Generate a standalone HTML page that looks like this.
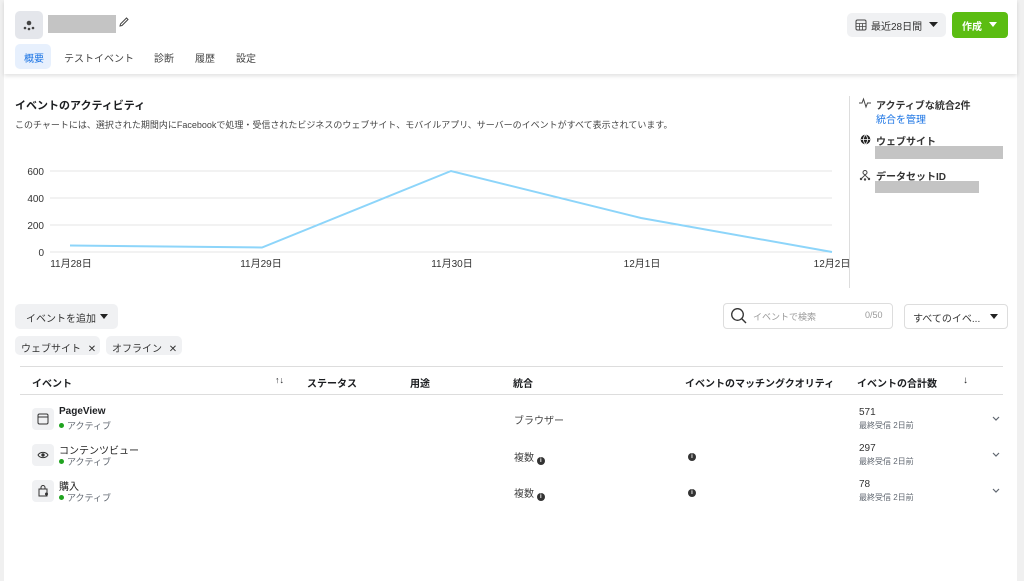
<!DOCTYPE html>
<html><head><meta charset="utf-8"><style>
*{margin:0;padding:0;box-sizing:border-box}
body{width:1024px;height:581px;background:#f0f0f0;font-family:"Liberation Sans","Noto Sans CJK JP",sans-serif;color:#1c1e21;position:relative;overflow:hidden;font-size:10px}
.a{position:absolute;white-space:nowrap}
.main{position:absolute;left:4px;top:0;width:1013px;height:581px;background:#fff}
.hdr{position:absolute;left:4px;top:0;width:1013px;height:74px;background:#fff;box-shadow:0 2px 4px rgba(0,0,0,.12)}
.gray{background:#c4c4c4}
.btn{background:#f0f1f3;border-radius:5px}
.b{font-weight:bold}
.sub{color:#606770;font-size:9px}
.dot{display:inline-block;width:5px;height:5px;border-radius:50%;background:#1fa31f;margin-right:3px;vertical-align:1px}
.ic{position:absolute;width:22px;height:22px;background:#f0f1f3;border-radius:4px}
.info{display:inline-block;width:8px;height:8px;border-radius:50%;background:#333;color:#fff;font-size:6px;text-align:center;line-height:8px;font-weight:bold;vertical-align:-1px}
</style></head><body>
<div class="main"></div>
<div class="hdr"></div>
<div class="a" style="left:15px;top:11px;width:28px;height:28px;background:#e4e6eb;border-radius:5px"></div>
<svg class="a" style="left:22px;top:18px" width="14" height="14" viewBox="0 0 14 14"><circle cx="7" cy="5" r="2.3" fill="#444"/><circle cx="3" cy="10" r="1.3" fill="#444"/><circle cx="7" cy="11" r="1.3" fill="#444"/><circle cx="11" cy="10" r="1.3" fill="#444"/></svg>
<div class="a gray" style="left:48px;top:15px;width:68px;height:18px"></div>
<svg class="a" style="left:118px;top:16px" width="12" height="12" viewBox="0 0 12 12"><path d="M2 10 L2.5 8 L8.5 2 L10 3.5 L4 9.5 Z" fill="none" stroke="#444" stroke-width="1"/></svg>
<div class="a" style="left:15px;top:44px;width:36px;height:25px;background:#e7f0fd;border-radius:5px"></div>
<div class="a" style="left:24px;top:50px;color:#1b74e4;font-size:10px">概要</div>
<div class="a" style="left:64px;top:50px;color:#444">テストイベント</div>
<div class="a" style="left:154px;top:50px;color:#444">診断</div>
<div class="a" style="left:195px;top:50px;color:#444">履歴</div>
<div class="a" style="left:236px;top:50px;color:#444">設定</div>
<div class="a btn" style="left:847px;top:13px;width:99px;height:24px"></div>
<svg class="a" style="left:855px;top:19px" width="12" height="12" viewBox="0 0 12 12"><rect x="1" y="1" width="10" height="10" rx="1.5" fill="none" stroke="#444"/><path d="M1 4.5H11M1 7.5H11M4.5 4.5V11M7.5 4.5V11" stroke="#444" stroke-width=".8"/></svg>
<div class="a" style="left:871px;top:18px;color:#333">最近28日間</div>
<svg class="a" style="left:929px;top:22px" width="9" height="5"><path d="M0 0H9L4.5 5Z" fill="#222"/></svg>
<div class="a" style="left:952px;top:12px;width:56px;height:26px;background:#5bbd12;border-radius:4px"></div>
<div class="a b" style="left:962px;top:18px;color:#fff">作成</div>
<svg class="a" style="left:989px;top:22px" width="8" height="5"><path d="M0 0H8L4 5Z" fill="#fff"/></svg>
<div class="a b" style="left:15px;top:97px;font-size:11px">イベントのアクティビティ</div>
<div class="a" style="left:15px;top:118px;font-size:9px;color:#444">このチャートには、選択された期間内にFacebookで処理・受信されたビジネスのウェブサイト、モバイルアプリ、サーバーのイベントがすべて表示されています。</div>
<div class="a" style="left:849px;top:96px;width:1px;height:192px;background:#ddd"></div>
<svg class="a" style="left:859px;top:97px" width="12" height="12" viewBox="0 0 12 12"><path d="M0 6H3L4.5 2L7 10L8.5 6H12" fill="none" stroke="#444" stroke-width="1"/></svg>
<div class="a b" style="left:876px;top:97px;color:#333">アクティブな統合2件</div>
<div class="a" style="left:876px;top:111px;color:#1b74e4">統合を管理</div>
<svg class="a" style="left:860px;top:134px" width="11" height="11" viewBox="0 0 12 12"><circle cx="6" cy="6" r="5.3" fill="#222"/><path d="M1 6H11M6 .7C3 4 3 8 6 11.3M6 .7C9 4 9 8 6 11.3" stroke="#fff" stroke-width=".9" fill="none"/></svg>
<div class="a b" style="left:876px;top:133px;color:#333">ウェブサイト</div>
<div class="a gray" style="left:875px;top:146px;width:128px;height:13px"></div>
<svg class="a" style="left:859px;top:169px" width="12" height="12" viewBox="0 0 12 12"><circle cx="6" cy="3.5" r="2" fill="none" stroke="#444"/><path d="M2 10L6 6L10 10" fill="none" stroke="#444" stroke-width=".9"/><circle cx="2" cy="10" r="1.2" fill="#444"/><circle cx="6" cy="10.5" r="1.2" fill="#444"/><circle cx="10" cy="10" r="1.2" fill="#444"/></svg>
<div class="a b" style="left:876px;top:168px;color:#333">データセットID</div>
<div class="a gray" style="left:875px;top:181px;width:104px;height:12px"></div>
<svg class="a" style="left:0;top:160px" width="860" height="115">
<g stroke="#e6e6e6" stroke-width="1"><line x1="50" y1="11" x2="832" y2="11"/><line x1="50" y1="38" x2="832" y2="38"/><line x1="50" y1="65" x2="832" y2="65"/><line x1="50" y1="92" x2="832" y2="92"/></g>
<g font-family="Liberation Sans" font-size="10" fill="#333" text-anchor="end"><text x="44" y="15">600</text><text x="44" y="42">400</text><text x="44" y="69">200</text><text x="44" y="96">0</text></g>
<polyline points="70,85.5 262,87.5 451,11 641,58 832,92" fill="none" stroke="#8dd5fa" stroke-width="2"/>
<g font-family="Liberation Sans,Noto Sans CJK JP" font-size="10" fill="#333" text-anchor="middle"><text x="71" y="107">11月28日</text><text x="261" y="107">11月29日</text><text x="452" y="107">11月30日</text><text x="642" y="107">12月1日</text><text x="832" y="107">12月2日</text></g>
</svg>
<div class="a btn" style="left:15px;top:304px;width:103px;height:25px"></div>
<div class="a" style="left:26px;top:310px;color:#333">イベントを追加</div>
<svg class="a" style="left:100px;top:314px" width="8" height="5"><path d="M0 0H8L4 5Z" fill="#222"/></svg>
<div class="a btn" style="left:15px;top:336px;width:85px;height:19px"></div>
<div class="a" style="left:21px;top:340px;color:#333">ウェブサイト <span style="margin-left:4px">✕</span></div>
<div class="a btn" style="left:106px;top:336px;width:76px;height:19px"></div>
<div class="a" style="left:112px;top:340px;color:#333">オフライン <span style="margin-left:4px">✕</span></div>
<div class="a" style="left:723px;top:303px;width:170px;height:26px;border:1px solid #ddd;border-radius:4px"></div>
<svg class="a" style="left:730px;top:307px" width="18" height="18" viewBox="0 0 18 18"><circle cx="7.5" cy="7.5" r="5.8" fill="none" stroke="#333" stroke-width="1.3"/><path d="M11.8 11.8L16 16" stroke="#333" stroke-width="1.4"/></svg>
<div class="a" style="left:753px;top:310px;color:#999;font-size:9px">イベントで検索</div>
<div class="a" style="left:865px;top:310px;color:#999;font-size:9px">0/50</div>
<div class="a" style="left:904px;top:304px;width:104px;height:25px;border:1px solid #ddd;border-radius:4px"></div>
<div class="a" style="left:913px;top:310px;color:#333">すべてのイベ...</div>
<svg class="a" style="left:990px;top:314px" width="8" height="5"><path d="M0 0H8L4 5Z" fill="#222"/></svg>
<div class="a" style="left:20px;top:366px;width:983px;height:1px;background:#ddd"></div>
<div class="a" style="left:20px;top:394px;width:983px;height:1px;background:#ddd"></div>
<div class="a b" style="left:32px;top:375px">イベント</div>
<div class="a" style="left:275px;top:375px;font-size:9px">↑↓</div>
<div class="a b" style="left:307px;top:375px">ステータス</div>
<div class="a b" style="left:410px;top:375px">用途</div>
<div class="a b" style="left:513px;top:375px">統合</div>
<div class="a b" style="left:685px;top:375px">イベントのマッチングクオリティ</div>
<div class="a b" style="left:857px;top:375px">イベントの合計数</div>
<div class="a" style="left:963px;top:375px">↓</div>
<div class="ic" style="left:32px;top:408px"></div>
<svg class="a" style="left:37px;top:413px" width="12" height="12" viewBox="0 0 12 12"><rect x="1" y="1" width="10" height="10" rx="1.5" fill="none" stroke="#333"/><path d="M1 4H11" stroke="#333"/></svg>
<div class="a b" style="left:59px;top:406px">PageView</div>
<div class="a sub" style="left:59px;top:419px"><span class="dot"></span>アクティブ</div>
<div class="a" style="left:514px;top:412px;color:#444">ブラウザー</div>
<div class="a" style="left:859px;top:407px;color:#333">571</div>
<div class="a sub" style="left:859px;top:420px;font-size:8px">最終受信 2日前</div>
<svg class="a" style="left:992px;top:416px" width="8" height="5"><path d="M1 1L4 4L7 1" fill="none" stroke="#606770" stroke-width="1.2"/></svg>
<div class="ic" style="left:32px;top:444px"></div>
<svg class="a" style="left:37px;top:450px" width="12" height="10" viewBox="0 0 12 10"><path d="M1 5C3 1.5 9 1.5 11 5C9 8.5 3 8.5 1 5Z" fill="none" stroke="#333"/><circle cx="6" cy="5" r="1.7" fill="#333"/></svg>
<div class="a" style="left:59px;top:442px;color:#222">コンテンツビュー</div>
<div class="a sub" style="left:59px;top:455px"><span class="dot"></span>アクティブ</div>
<div class="a" style="left:514px;top:449px;color:#444">複数 <span class="info">i</span></div>
<div class="a" style="left:688px;top:449px"><span class="info">i</span></div>
<div class="a" style="left:859px;top:443px;color:#333">297</div>
<div class="a sub" style="left:859px;top:456px;font-size:8px">最終受信 2日前</div>
<svg class="a" style="left:992px;top:452px" width="8" height="5"><path d="M1 1L4 4L7 1" fill="none" stroke="#606770" stroke-width="1.2"/></svg>
<div class="ic" style="left:32px;top:480px"></div>
<svg class="a" style="left:37px;top:485px" width="12" height="12" viewBox="0 0 12 12"><path d="M2 4H10V11H2Z" fill="none" stroke="#333"/><path d="M4 4V2.5A2 2 0 0 1 8 2.5V4" fill="none" stroke="#333"/><circle cx="9.5" cy="9" r="1.5" fill="#333"/></svg>
<div class="a" style="left:59px;top:478px;color:#222">購入</div>
<div class="a sub" style="left:59px;top:491px"><span class="dot"></span>アクティブ</div>
<div class="a" style="left:514px;top:485px;color:#444">複数 <span class="info">i</span></div>
<div class="a" style="left:688px;top:485px"><span class="info">i</span></div>
<div class="a" style="left:859px;top:479px;color:#333">78</div>
<div class="a sub" style="left:859px;top:492px;font-size:8px">最終受信 2日前</div>
<svg class="a" style="left:992px;top:488px" width="8" height="5"><path d="M1 1L4 4L7 1" fill="none" stroke="#606770" stroke-width="1.2"/></svg>
</body></html>
